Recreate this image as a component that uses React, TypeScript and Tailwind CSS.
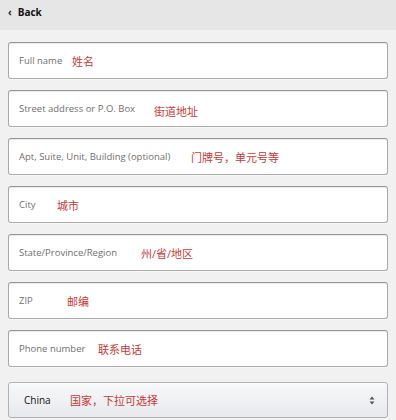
import React from "react";

type Field = {
  label: string;
  note: string;
  labelWidth: number;
  noteDrop?: number;
};

// widths keep the red notes where the reference puts them
const fields: Field[] = [
  { label: "Full name", note: "姓名", labelWidth: 53 },
  { label: "Street address or P.O. Box", note: "街道地址", labelWidth: 135, noteDrop: 3 },
  { label: "Apt, Suite, Unit, Building (optional)", note: "门牌号，单元号等", labelWidth: 172 },
  { label: "City", note: "城市", labelWidth: 38 },
  { label: "State/Province/Region", note: "州/省/地区", labelWidth: 122 },
  { label: "ZIP", note: "邮编", labelWidth: 48 },
  { label: "Phone number", note: "联系电话", labelWidth: 79 },
];

const font = { fontFamily: '"Open Sans", "Noto Sans CJK SC", sans-serif' };

function TextField({ label, note, labelWidth, noteDrop }: Field) {
  return (
    <div className="flex h-[37px] items-center rounded-[3px] border border-[#a9a9a9] border-t-[#949494] bg-white pl-[10px] shadow-[0_1px_0_rgba(255,255,255,0.5),inset_0_1px_0_rgba(0,0,0,0.07)]">
      <span
        className="shrink-0 pt-[1px] text-[9.5px] leading-none text-[#6f6f6f]"
        style={{ width: labelWidth }}
      >
        {label}
      </span>
      <span
        className="text-[11px] leading-none text-[#c93a36]"
        style={{ marginTop: 2 + (noteDrop ?? 0) }}
      >
        {note}
      </span>
    </div>
  );
}

export default function App() {
  return (
    <div className="h-[420px] w-[396px] overflow-hidden bg-[#f1f1f1]" style={font}>
      {/* Top bar */}
      <div className="flex h-[30px] items-center bg-[#e6e6e6] pb-[6px] pl-[8px]">
        <span className="mr-[6px] text-[10px] font-bold text-[#222]">‹</span>
        <span className="text-[10px] font-bold text-[#111]">Back</span>
      </div>

      {/* Address form */}
      <div className="flex flex-col gap-[11px] px-[8px] pt-[12px]">
        {fields.map((f) => (
          <TextField key={f.label} {...f} />
        ))}

        {/* Country select */}
        <div className="mt-[4px] flex h-[36px] items-center rounded-[3px] border border-[#adb1b8] bg-gradient-to-b from-[#f7f8fa] to-[#e7e9ec] pl-[15px] pr-[12px] shadow-[0_1px_0_rgba(255,255,255,0.6)_inset]">
          <span className="w-[46px] shrink-0 text-[10px] text-[#111]">China</span>
          <span className="text-[11px] leading-none text-[#c93a36]">国家，下拉可选择</span>
          <svg className="ml-auto" width="6" height="9" viewBox="0 0 6 9">
            <path d="M3 0.5 L5.5 3.5 H0.5 Z" fill="#555" />
            <path d="M3 8.5 L5.5 5.5 H0.5 Z" fill="#555" />
          </svg>
        </div>
      </div>
    </div>
  );
}
